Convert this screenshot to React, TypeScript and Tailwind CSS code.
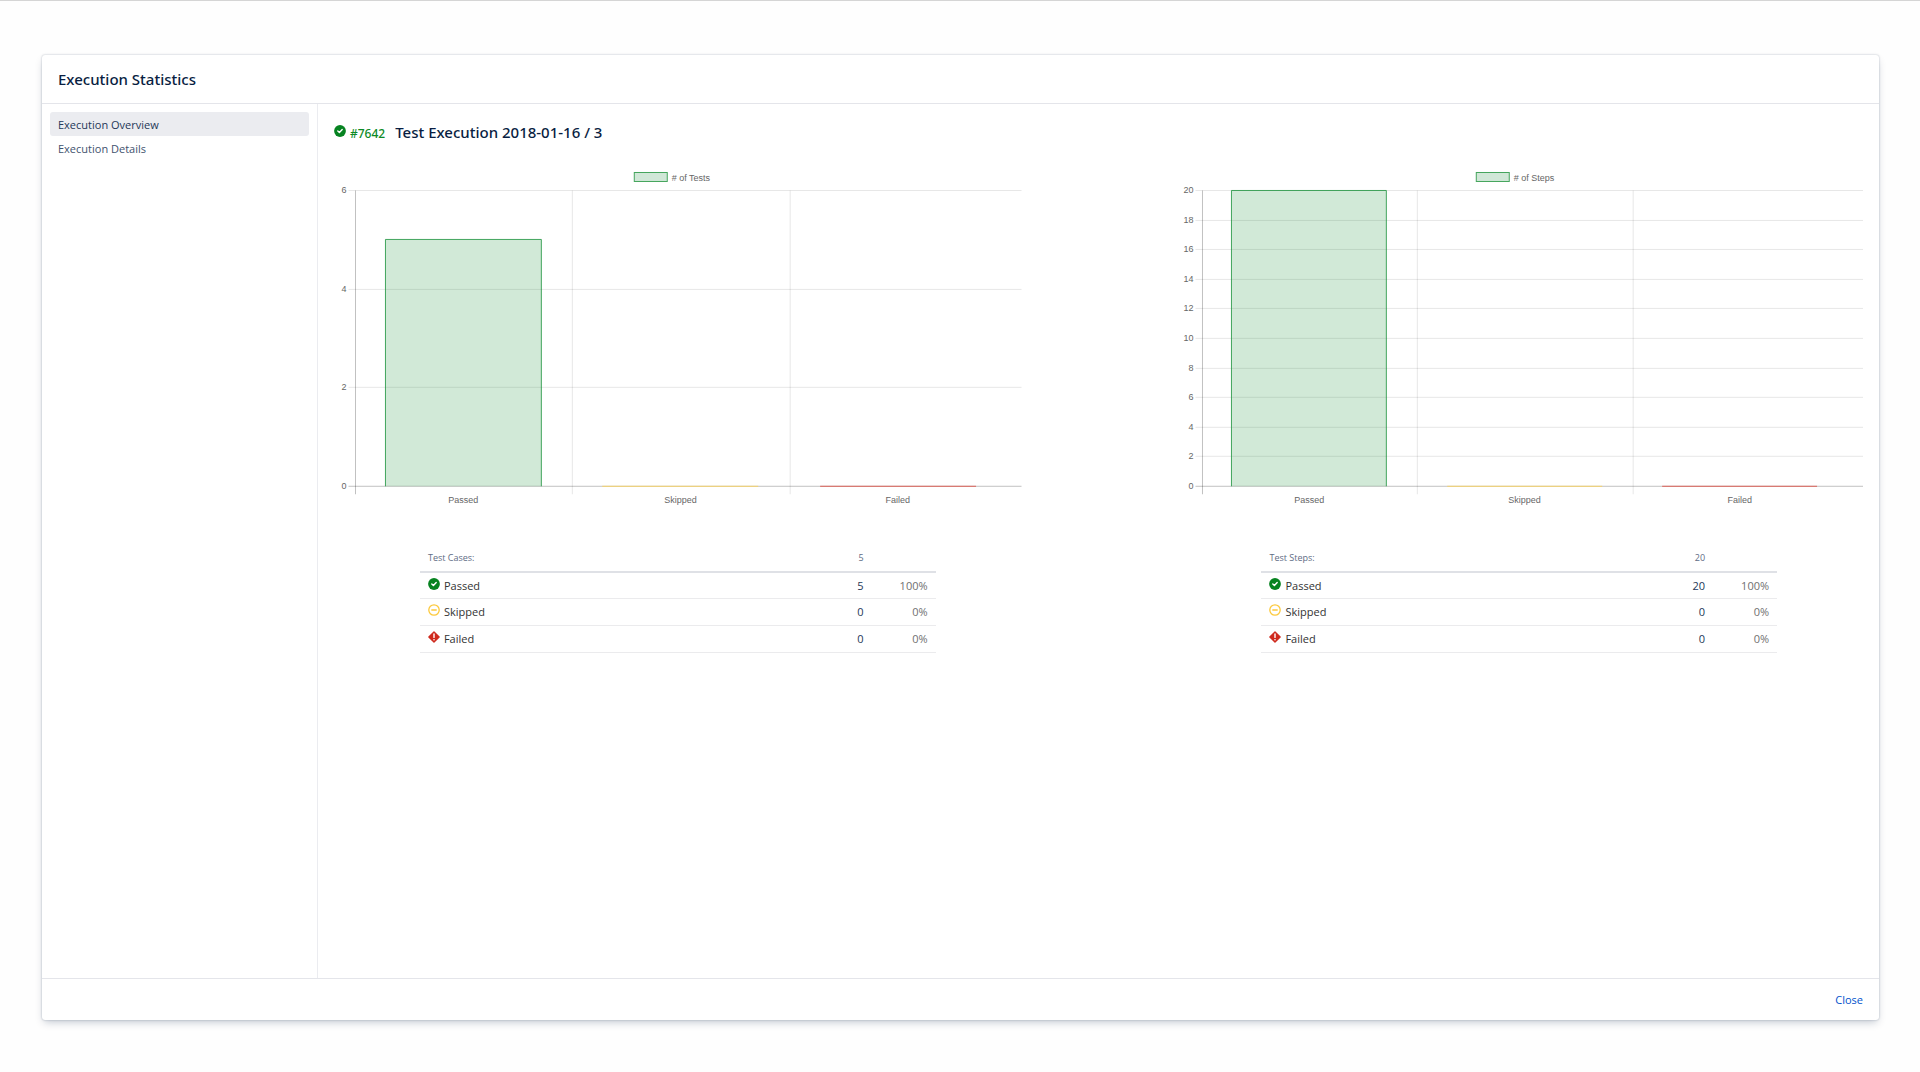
import React, { useState } from 'react';

interface ResultRow {
    status: 'Passed' | 'Skipped' | 'Failed';
    count: number;
    percent: string;
}

interface ChartProps {
    label: string;
    rows: ResultRow[];
    max: number;
    axisX: number;
    step: number;
}

interface SummaryProps {
    title: string;
    total: number;
    rows: ResultRow[];
}

const testRows: ResultRow[] = [
    { status: 'Passed', count: 5, percent: '100%' },
    { status: 'Skipped', count: 0, percent: '0%' },
    { status: 'Failed', count: 0, percent: '0%' },
];

const stepRows: ResultRow[] = [
    { status: 'Passed', count: 20, percent: '100%' },
    { status: 'Skipped', count: 0, percent: '0%' },
    { status: 'Failed', count: 0, percent: '0%' },
];

const strokes = { Passed: '#189038', Skipped: '#ffd351', Failed: '#e0453a' };

function StatusIcon({ status }: { status: ResultRow['status'] }) {
    return (
        <svg viewBox="0 0 12 12" className="size-3 shrink-0" aria-hidden="true">
            {status === 'Passed' && (
                <>
                    <circle cx="6" cy="6" r="5.9" fill="#078321" />
                    <path d="M3.8 6.1l1.6 1.5 2.8-3" fill="none" stroke="#fff" strokeWidth="1.4" strokeLinecap="round" strokeLinejoin="round" />
                </>
            )}
            {status === 'Skipped' && (
                <>
                    <circle cx="6" cy="6" r="5.2" fill="none" stroke="#fcc93c" strokeWidth="1.3" />
                    <path d="M3.3 6h5.4" stroke="#fcc93c" strokeWidth="1.5" />
                </>
            )}
            {status === 'Failed' && (
                <>
                    <path d="M6 .9L11.1 6 6 11.1.9 6z" fill="#cf2a1e" stroke="#cf2a1e" strokeWidth="1.4" strokeLinejoin="round" />
                    <path d="M6 3v3.4" stroke="#fff" strokeWidth="1.4" strokeLinecap="round" />
                    <circle cx="6" cy="8.7" r=".8" fill="#fff" />
                </>
            )}
        </svg>
    );
}

function BarChart({ label, rows, max, axisX, step }: ChartProps) {
    const top = 25.5;
    const bottom = 321.5;
    const yOf = (value: number) => Math.floor(bottom - (value / max) * (bottom - top)) + 0.5;
    const ticks = Array.from({ length: max / 2 + 1 }, (_, i) => i * 2);
    const barWidth = Math.floor(step * 0.72);

    return (
        <svg viewBox="0 0 688 344" className="block w-full font-['Liberation_Sans',Arial,sans-serif] text-[9px]" role="img" aria-label={label}>
            <rect x="300.5" y="7.5" width="33" height="9" fill="#d0e7d7" stroke="#45a55d" />
            <text x="338" y="16" fill="#666">{label}</text>

            {ticks.map((tick) => (
                <g key={tick}>
                    <path d={`M${axisX - 7} ${yOf(tick)}H688`} stroke="#000" strokeOpacity={tick === 0 ? 0.25 : 0.1} />
                    <text x={axisX - 9} y={yOf(tick) + 3} textAnchor="end" fill="#666">{tick}</text>
                </g>
            ))}
            {rows.map((row, i) => {
                const x = Math.floor(axisX + i * step - 0.5) + 0.5;
                return <path key={row.status} d={`M${x} ${top}V${bottom + 8}`} stroke="#000" strokeOpacity={i === 0 ? 0.25 : 0.1} />;
            })}

            {rows.map((row, i) => {
                const center = axisX + step * (i + 0.5) - 1;
                const left = Math.floor(center - barWidth / 2) + 0.5;
                const y = yOf(row.count);
                return (
                    <g key={row.status}>
                        <path
                            d={`M${left} ${bottom}V${y}H${left + barWidth}V${bottom}`}
                            fill={strokes[row.status]}
                            fillOpacity="0.2"
                            stroke={strokes[row.status]}
                            strokeOpacity="0.8"
                        />
                        <text x={center} y="338" textAnchor="middle" fill="#666">{row.status}</text>
                    </g>
                );
            })}
        </svg>
    );
}

function SummaryTable({ title, total, rows }: SummaryProps) {
    return (
        <table className="mx-auto mt-9 w-3/4 border-collapse text-[11px] leading-4">
            <thead>
                <tr className="h-[27px] border-b-2 border-[#dfe1e6] text-[9px] text-[#5e6c84]">
                    <th scope="col" className="px-2 text-left font-medium">{title}</th>
                    <th scope="col" className="w-16 px-2 text-right font-medium">{total}</th>
                    <td className="w-16" />
                </tr>
            </thead>
            <tbody>
                {rows.map((row) => (
                    <tr key={row.status} className="h-[27px] border-b border-[#ebebed]">
                        <td className="px-2 text-[#333]">
                            <div className="flex items-start gap-1">
                                <StatusIcon status={row.status} />
                                {row.status}
                            </div>
                        </td>
                        <td className="px-2 text-right text-[#253858]">{row.count}</td>
                        <td className="px-2 text-right text-[#707070]">{row.percent}</td>
                    </tr>
                ))}
            </tbody>
        </table>
    );
}

export default function App() {
    const [page, setPage] = useState<string>('Execution Overview');

    return (
        <div className="flex min-h-screen flex-col border-t border-[#d5d5d5] bg-[#fefefe] pt-[54px] pr-[41px] pb-[52px] pl-[42px] font-['Open_Sans','Segoe_UI',sans-serif]">
            <section className="flex grow flex-col rounded-[3px] bg-white shadow-[0_4px_8px_-2px_rgba(9,30,66,0.25),0_0_2px_rgba(9,30,66,0.31)]">
                <header className="flex h-[49px] items-center border-b border-[#e4e5ea] px-4">
                    <h1 className="font-['Noto_Sans','Segoe_UI',sans-serif] text-[15px] font-medium text-[#091e42]">Execution Statistics</h1>
                </header>

                <div className="flex grow">
                    <nav className="flex w-[276px] shrink-0 flex-col border-r border-[#ebecf0] p-2">
                        {['Execution Overview', 'Execution Details'].map((name) => (
                            <button
                                key={name}
                                onClick={() => setPage(name)}
                                className={`h-6 rounded-[3px] px-2 pt-0.5 text-left text-[11px] ${page === name ? 'bg-[#ebecf0] text-[#253858]' : 'text-[#42526e]'}`}
                            >
                                {name}
                            </button>
                        ))}
                    </nav>

                    <main className="min-w-0 grow px-4 pt-4">
                        <div className="flex h-[45px] items-start">
                            <div className="mt-[5px]"><StatusIcon status="Passed" /></div>
                            <a href="#7642" className="mt-1 ml-1 font-['Noto_Sans','Segoe_UI',sans-serif] text-[12px] leading-5 font-medium text-[#0c8a25]">#7642</a>
                            <h2 className="ml-2.5 font-['Noto_Sans','Segoe_UI',sans-serif] text-[15px] leading-6 font-medium text-[#091e42]">Test Execution 2018-01-16 / 3</h2>
                        </div>

                        <div className="grid grid-cols-2 gap-[154px]">
                            <div>
                                <BarChart label="# of Tests" rows={testRows} max={6} axisX={21.5} step={217.5} />
                                <SummaryTable title="Test Cases:" total={5} rows={testRows} />
                            </div>
                            <div>
                                <BarChart label="# of Steps" rows={stepRows} max={20} axisX={26.5} step={215.5} />
                                <SummaryTable title="Test Steps:" total={20} rows={stepRows} />
                            </div>
                        </div>
                    </main>
                </div>

                <footer className="flex h-[42px] items-center justify-end border-t border-[#e4e5ea] px-4">
                    <button className="pt-0.5 text-[11px] text-[#0052cc]">Close</button>
                </footer>
            </section>
        </div>
    );
}
